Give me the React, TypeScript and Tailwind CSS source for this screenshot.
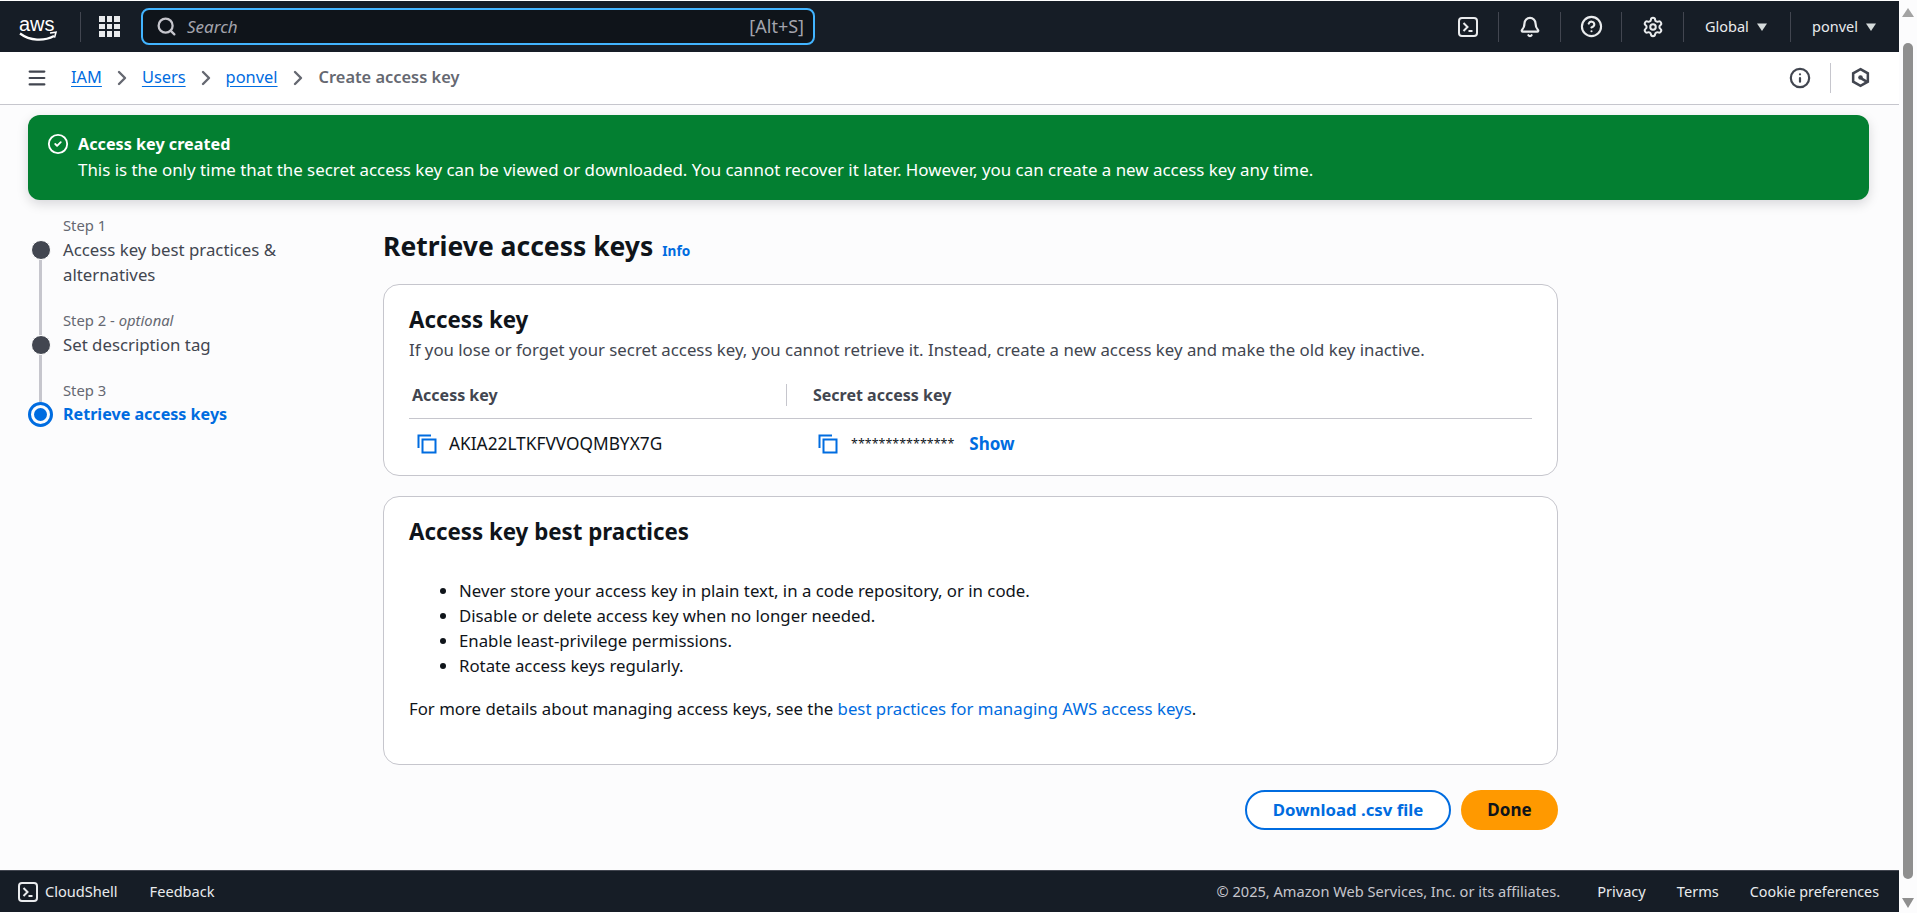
import React from "react";
import { Search, Bell, CircleHelp, Settings, Info, Menu, ChevronRight, CircleCheck } from "lucide-react";

const fontStack = { fontFamily: '"Noto Sans", sans-serif' };

const TerminalIcon = ({ className }: { className?: string }) => (
  <svg viewBox="0 0 20 20" fill="none" className={className}>
    <rect x="1" y="1" width="18" height="18" rx="3" stroke="currentColor" strokeWidth="2" />
    <path d="M5.5 6l4 4-4 4M10.5 14h4" stroke="currentColor" strokeWidth="2" />
  </svg>
);

const CopyIcon = () => (
  <svg viewBox="0 0 20 20" fill="none" className="w-5 h-5 text-[#006ce0] shrink-0">
    <path d="M1.5 14V1.5H14" stroke="currentColor" strokeWidth="2" />
    <rect x="5.5" y="5.5" width="13" height="13" stroke="currentColor" strokeWidth="2" />
  </svg>
);

const Caret = () => (
  <svg viewBox="0 0 12 12" className="w-3 h-3 ml-[7px] text-[#d5dbdb]" fill="currentColor">
    <path d="M1 2.5h10L6 10z" />
  </svg>
);

const AwsLogo = () => (
  <svg viewBox="0 0 40 32" className="w-10 h-8" fill="none">
    <text x="0" y="20" fill="white" fontSize="20" fontFamily="Liberation Sans, sans-serif">aws</text>
    <path d="M1 22.5c10 7.5 24 8 34 2.5" stroke="white" strokeWidth="2.2" />
    <path d="M31 22l6-.8-1.5 5.4" stroke="white" strokeWidth="1.6" />
  </svg>
);

const GridIcon = () => (
  <div className="grid grid-cols-3 gap-[2px] w-[21px]">
    {Array.from({ length: 9 }).map((_, i) => (
      <div key={i} className="w-[5.6px] h-[5.6px] bg-[#e9ebed]" />
    ))}
  </div>
);

const Divider = () => <div className="w-px h-[30px] bg-[#424650]" />;

const TopNav = () => (
  <div className="h-[51px] mt-px bg-[#161d26] flex items-center shrink-0 text-white">
    <div className="ml-[19px] w-[40px]"><AwsLogo /></div>
    <div className="w-px h-[30px] bg-[#424650] ml-[21px]" />
    <div className="ml-[18px]"><GridIcon /></div>
    <div className="ml-[21px] w-[674px] h-[37px] rounded-[8px] border-2 border-[#42b4ff] bg-[#0f141a] flex items-center pl-[13px] pr-[9px]">
      <Search className="w-[21px] h-[21px] text-[#c6c6cd]" strokeWidth={2.6} />
      <span className="ml-[10px] italic text-[17px] text-[#a4a4ad]">Search</span>
      <span className="ml-auto text-[18px] text-[#a4a4ad]">[Alt+S]</span>
    </div>
    <div className="ml-auto flex items-center">
      <TerminalIcon className="w-5 h-5 text-[#e9ebed]" />
      <div className="w-[21px] flex justify-end"><Divider /></div>
      <div className="w-[61px] flex justify-center"><Bell className="w-[22px] h-[22px] text-[#e9ebed]" strokeWidth={2.4} /></div>
      <Divider />
      <div className="w-[60px] flex justify-center"><CircleHelp className="w-[23px] h-[23px] text-[#e9ebed]" strokeWidth={2.2} /></div>
      <Divider />
      <div className="w-[61px] flex justify-center"><Settings className="w-[22px] h-[22px] text-[#e9ebed]" strokeWidth={2.2} /></div>
      <Divider />
      <div className="w-[106px] flex items-center pl-[21px] text-[14.5px] text-[#e9ebed]">Global<Caret /></div>
      <Divider />
      <div className="w-[108px] flex items-center pl-[21px] text-[14.5px] text-[#e9ebed]">ponvel<Caret /></div>
    </div>
  </div>
);

const Crumbs = () => (
  <div className="h-[53px] shrink-0 bg-white border-b border-[#c6c6cd] flex items-center pb-[1px] text-[16.4px]">
    <Menu className="ml-[26px] w-[22px] h-[22px] text-[#424650]" strokeWidth={2.4} />
    <a className="ml-[23px] text-[#006ce0] underline underline-offset-[3px]">IAM</a>
    <ChevronRight className="mx-[8px] w-[24px] h-[24px] text-[#656871]" strokeWidth={2.4} />
    <a className="text-[#006ce0] underline underline-offset-[3px]">Users</a>
    <ChevronRight className="mx-[8px] w-[24px] h-[24px] text-[#656871]" strokeWidth={2.4} />
    <a className="text-[#006ce0] underline underline-offset-[3px]">ponvel</a>
    <ChevronRight className="ml-[8px] mr-[9px] w-[24px] h-[24px] text-[#656871]" strokeWidth={2.4} />
    <span className="font-semibold text-[#656871]">Create access key</span>
    <div className="ml-auto flex items-center">
      <Info className="w-[22px] h-[22px] text-[#424650]" strokeWidth={2.4} />
      <div className="w-px h-[30px] bg-[#c6c6cd] mx-[19px]" />
      <svg viewBox="0 0 20 20" fill="none" className="w-[21px] h-[21px] mr-[28px]">
        <path d="M10 2l7 4v8l-7 4-7-4V6z" stroke="#424650" strokeWidth="2.4" />
        <circle cx="10" cy="10" r="2.2" fill="#424650" />
        <path d="M11 11l5 3" stroke="#424650" strokeWidth="2.4" />
      </svg>
    </div>
  </div>
);

const Flash = () => (
  <div className="ml-[28px] mr-[30px] mt-[10px] h-[85px] shrink-0 rounded-[12px] bg-[#037f31] text-white flex pl-[19px] pt-[17px] shadow-[0_4px_12px_rgba(0,7,22,0.15)]">
    <CircleCheck className="w-[22px] h-[22px] mt-[1px]" strokeWidth={2} />
    <div className="ml-[9px] leading-[25px]">
      <div className="font-bold text-[16.2px]">Access key created</div>
      <div className="text-[16.9px]">This is the only time that the secret access key can be viewed or downloaded. You cannot recover it later. However, you can create a new access key any time.</div>
    </div>
  </div>
);

const Dot = () => <div className="w-[20px] h-[20px] rounded-full bg-[#424650] border border-white" />;
const Line = ({ h }: { h: string }) => <div className={`w-[3px] bg-[#c6c6cd] ${h}`} />;

const Steps = () => (
  <div className="w-[383px] shrink-0 pl-[28px] pt-[14px] text-[#424650] flex">
    <div className="flex flex-col items-center w-[25px]">
      <div className="h-[26px]" />
      <Dot />
      <Line h="h-[75px]" />
      <Dot />
      <Line h="h-[47px]" />
      <div className="w-[25px] h-[25px] shrink-0 rounded-full border-[3px] border-[#006ce0] flex items-center justify-center">
        <div className="w-[13px] h-[13px] rounded-full bg-[#006ce0]" />
      </div>
    </div>
    <div className="ml-[10px] w-[240px] text-[16.8px] leading-[25px]">
      <div className="text-[14.8px] leading-[23px] text-[#656871]">Step 1</div>
      <div>Access key best practices &amp; alternatives</div>
      <div className="text-[14.8px] leading-[23px] text-[#656871] mt-[22px]">Step 2 - <i>optional</i></div>
      <div>Set description tag</div>
      <div className="text-[14.8px] leading-[23px] text-[#656871] mt-[22px]">Step 3</div>
      <div className="font-bold text-[16.1px] text-[#006ce0]">Retrieve access keys</div>
    </div>
  </div>
);

const Card = ({ children, className }: { children: React.ReactNode; className: string }) => (
  <div className={`rounded-[16px] border border-[#c6c6cd] bg-white px-[25px] ${className}`}>{children}</div>
);

const Main = () => (
  <div className="w-[1175px] pt-[28px]">
    <div className="flex items-baseline h-[36px]">
      <h1 className="text-[26.5px] leading-[36px] font-bold text-[#0f141a]">Retrieve access keys</h1>
      <a className="ml-[9px] text-[13.6px] font-bold text-[#006ce0]">Info</a>
    </div>
    <Card className="mt-[20px] h-[192px] pt-[20px]">
      <h2 className="text-[22.3px] leading-[30px] font-bold text-[#0f141a]">Access key</h2>
      <p className="mt-[3px] text-[16.8px] leading-[24px] text-[#424650]">If you lose or forget your secret access key, you cannot retrieve it. Instead, create a new access key and make the old key inactive.</p>
      <div className="flex items-center h-[47px] mt-[10px] border-b border-[#c6c6cd] text-[16px] font-bold text-[#424650]">
        <div className="w-[377px] pl-[3px]">Access key</div>
        <div className="w-px h-[22px] bg-[#c6c6cd]" />
        <div className="pl-[26px]">Secret access key</div>
      </div>
      <div className="flex items-center h-[50px] text-[#0f141a]">
        <div className="w-[378px] pl-[8px] flex items-center">
          <CopyIcon />
          <span className="ml-[12px] text-[17.3px]">AKIA22LTKFVVOQMBYX7G</span>
        </div>
        <div className="pl-[31px] flex items-center">
          <CopyIcon />
          <span className="ml-[13px] text-[12.5px]">***************</span>
          <a className="ml-[15px] text-[17px] font-bold text-[#006ce0]">Show</a>
        </div>
      </div>
    </Card>
    <Card className="mt-[20px] h-[269px] pt-[20px]">
      <h2 className="text-[22.3px] leading-[30px] font-bold text-[#0f141a]">Access key best practices</h2>
      <ul className="list-disc pl-[50px] mt-[31px] text-[16.8px] leading-[25px] text-[#0f141a]">
        <li>Never store your access key in plain text, in a code repository, or in code.</li>
        <li>Disable or delete access key when no longer needed.</li>
        <li>Enable least-privilege permissions.</li>
        <li>Rotate access keys regularly.</li>
      </ul>
      <p className="mt-[18px] text-[16.8px] leading-[25px] text-[#0f141a]">
        For more details about managing access keys, see the <a className="text-[#006ce0]">best practices for managing AWS access keys</a>.
      </p>
    </Card>
    <div className="mt-[25px] flex justify-end gap-[10px]">
      <button className="w-[206px] h-[40px] rounded-full border-2 border-[#006ce0] bg-white text-[16.8px] font-bold text-[#006ce0]">Download .csv file</button>
      <button className="w-[97px] h-[40px] rounded-full bg-[#ff9900] text-[17px] font-bold text-[#0f141a]">Done</button>
    </div>
  </div>
);

const Footer = () => (
  <div className="h-[42px] shrink-0 bg-[#161d26] border-t border-[#424650] flex items-center text-[14.6px] text-[#e9ebed]">
    <TerminalIcon className="ml-[18px] w-5 h-5" />
    <span className="ml-[7px]">CloudShell</span>
    <span className="ml-[32px]">Feedback</span>
    <span className="ml-auto text-[#c6c6cd]">© 2025, Amazon Web Services, Inc. or its affiliates.</span>
    <span className="ml-[37px]">Privacy</span>
    <span className="ml-[31px]">Terms</span>
    <span className="ml-[31px] mr-[20px] text-[14.3px]">Cookie preferences</span>
  </div>
);

const Scrollbar = () => (
  <div className="w-[18px] shrink-0 bg-[#fcfcfd] flex flex-col items-center">
    <svg viewBox="0 0 18 18" className="w-[18px] h-[18px] mt-[4px] shrink-0" fill="#a3a3a3"><path d="M3 13h12L9 4z" /></svg>
    <div className="w-[10px] h-[836px] mt-[21px] rounded-full bg-[#8f8f8f] shrink-0" />
    <svg viewBox="0 0 18 18" className="w-[18px] h-[18px] mt-[15px] shrink-0" fill="#8f8f8f"><path d="M3 4h12L9 14z" /></svg>
  </div>
);

export default function App() {
  return (
    <div className="h-[913px] w-[1917px] flex overflow-hidden bg-white" style={fontStack}>
      <div className="flex-1 min-w-0 flex flex-col">
        <TopNav />
        <Crumbs />
        <div className="flex-1 min-h-0 bg-[#fcfcfd] flex flex-col">
          <Flash />
          <div className="flex flex-1">
            <Steps />
            <Main />
          </div>
        </div>
        <Footer />
        <div className="h-px bg-white shrink-0" />
      </div>
      <Scrollbar />
    </div>
  );
}
